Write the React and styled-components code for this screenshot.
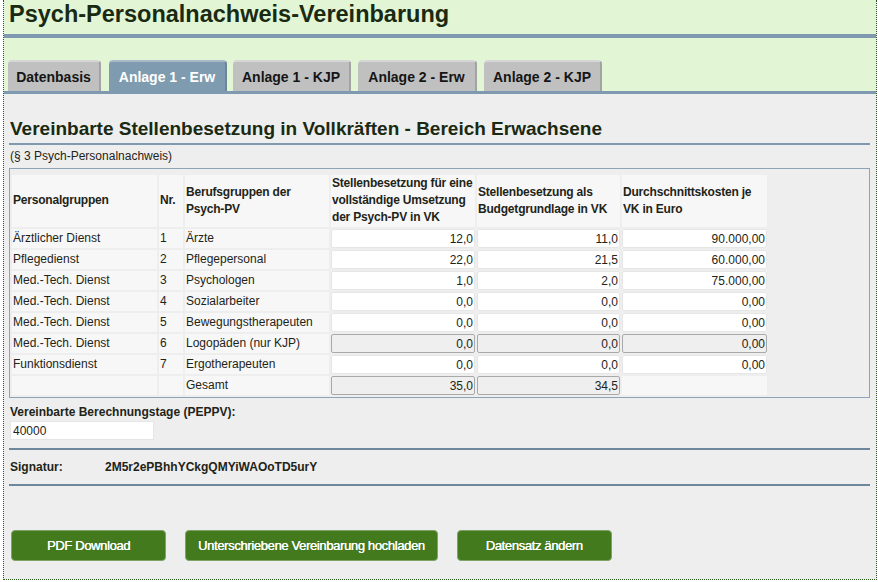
import React from 'react';
import styled, { createGlobalStyle, css } from 'styled-components';

const GlobalStyle = createGlobalStyle`
    html, body {
        margin: 0;
        padding: 0;
        background: #ffffff;
    }
    body {
        font-family: "Liberation Sans", Arial, sans-serif;
        color: #1e2418;
    }
`;

const Page = styled.div`
    margin: 0 1px 0 3px;
    height: 580px;
    border: 1px dotted #2f5a1c;
    border-top: none;
    background: #eeeeee;
    box-sizing: border-box;
    overflow: hidden;
`;

const Header = styled.header`
    background: #e2f6d6;
`;

const Title = styled.h1`
    margin: 0;
    padding: 0 0 0 5px;
    height: 34px;
    box-sizing: border-box;
    font-size: 23.5px;
    line-height: 29px;
    font-weight: bold;
    color: #1a2a12;
`;

const TopRule = styled.div`
    height: 4px;
    background: #7f9ab0;
`;

const TabBar = styled.nav`
    display: flex;
    align-items: flex-end;
    padding: 22px 0 0 4px;
    border-bottom: 3px solid #7f9ab0;
`;

const Tab = styled.div`
    height: 31px;
    width: ${props => props.w}px;
    margin-right: ${props => props.gap}px;
    box-sizing: border-box;
    display: flex;
    align-items: center;
    justify-content: center;
    font-size: 14px;
    font-weight: bold;
    color: #151515;
    background: #c0c0c0;
    border-top: 2px solid #d6d6d6;
    border-right: 2px solid #a3a3a3;
    border-radius: 4px 4px 0 0;

    ${props => props.active && css`
        background: #7f9bb0;
        color: #ffffff;
        border-top-color: #a7b9c7;
        border-right-color: #6d8598;
    `}
`;

const Content = styled.main`
    padding: 0 6px 0 5px;
`;

const SectionTitle = styled.h2`
    margin: 0;
    padding: 25px 0 4px 1px;
    font-size: 19px;
    line-height: 20px;
    font-weight: bold;
    color: #1a2a12;
    border-bottom: 2px solid #7f9ab0;
`;

const Note = styled.div`
    font-size: 12px;
    line-height: 14px;
    padding: 4px 0 5px 1px;
`;

const TableBox = styled.div`
    border: 1px solid #8ea3b6;
    padding: 4px 1px 0 0;
`;

const Table = styled.table`
    border-spacing: 2px;
    font-size: 12px;
    table-layout: fixed;
    width: 759px;
`;

const HeadCell = styled.th`
    background: #f7f7f7;
    text-align: left;
    vertical-align: middle;
    font-weight: bold;
    line-height: 17px;
    letter-spacing: -0.2px;
    padding: 0 0 1px 1px;
    height: 52px;
    width: ${props => props.w}px;
    box-sizing: border-box;
    white-space: nowrap;
`;

const Cell = styled.td`
    background: #f7f7f7;
    height: 19px;
    padding: 0 0 0 1px;
    line-height: 19px;
    white-space: nowrap;

    ${props => props.field && css`
        padding: 0;
    `}
`;

const NumInput = styled.input`
    display: block;
    width: 100%;
    height: 19px;
    box-sizing: border-box;
    margin: 0;
    padding: 0 1px 0 0;
    border: 1px solid #e6e6e6;
    border-radius: 2px;
    background: #ffffff;
    font-family: "Liberation Sans", Arial, sans-serif;
    font-size: 12px;
    color: #1e2418;
    text-align: right;
    outline: none;

    &:disabled {
        background: #efefef;
        border-color: #a9a9a9;
        color: #1e2418;
    }
`;

const FieldLabel = styled.div`
    font-size: 12px;
    font-weight: bold;
    padding: 7px 0 2px 1px;
    line-height: 14px;
`;

const TextInput = styled.input`
    display: block;
    width: 144px;
    height: 19px;
    box-sizing: border-box;
    margin: 0 0 0 1px;
    padding: 0 2px;
    border: 1px solid #e6e6e6;
    background: #ffffff;
    font-family: "Liberation Sans", Arial, sans-serif;
    font-size: 12px;
    color: #1e2418;
    outline: none;
`;

const Divider = styled.div`
    height: 2px;
    background: #6f879b;
    margin-top: ${props => props.mt}px;
`;

const SigRow = styled.div`
    display: flex;
    font-size: 12px;
    font-weight: bold;
    line-height: 14px;
    padding: 10px 0 10px 1px;
`;

const SigLabel = styled.span`
    width: 95px;
`;

const ButtonRow = styled.div`
    display: flex;
    gap: 19px;
    padding: 44px 0 0 2px;
`;

const Button = styled.button`
    min-width: 155px;
    height: 31px;
    padding: 0 12px;
    box-sizing: border-box;
    background: #437a1e;
    border: 1px solid #7fa266;
    border-radius: 4px;
    color: #ffffff;
    font-family: "Liberation Sans", Arial, sans-serif;
    font-size: 13px;
    letter-spacing: -0.35px;
    text-shadow: 0.3px 0 0 #ffffff;
    cursor: pointer;
`;

const tabs = [
    { label: 'Datenbasis', w: 93, gap: 8 },
    { label: 'Anlage 1 - Erw', w: 118, gap: 6 },
    { label: 'Anlage 1 - KJP', w: 118, gap: 7 },
    { label: 'Anlage 2 - Erw', w: 119, gap: 7 },
    { label: 'Anlage 2 - KJP', w: 118, gap: 0 },
];

const rows = [
    { group: 'Ärztlicher Dienst', nr: 1, job: 'Ärzte', a: '12,0', b: '11,0', c: '90.000,00' },
    { group: 'Pflegedienst', nr: 2, job: 'Pflegepersonal', a: '22,0', b: '21,5', c: '60.000,00' },
    { group: 'Med.-Tech. Dienst', nr: 3, job: 'Psychologen', a: '1,0', b: '2,0', c: '75.000,00' },
    { group: 'Med.-Tech. Dienst', nr: 4, job: 'Sozialarbeiter', a: '0,0', b: '0,0', c: '0,00' },
    { group: 'Med.-Tech. Dienst', nr: 5, job: 'Bewegungstherapeuten', a: '0,0', b: '0,0', c: '0,00' },
    { group: 'Med.-Tech. Dienst', nr: 6, job: 'Logopäden (nur KJP)', a: '0,0', b: '0,0', c: '0,00', locked: true },
    { group: 'Funktionsdienst', nr: 7, job: 'Ergotherapeuten', a: '0,0', b: '0,0', c: '0,00' },
];

const App = () => {
    return (
        <>
            <GlobalStyle />
            <Page>
                <Header>
                    <Title>Psych-Personalnachweis-Vereinbarung</Title>
                    <TopRule />
                    <TabBar>
                        {tabs.map((t, i) => (
                            <Tab key={t.label} w={t.w} gap={t.gap} active={i === 1}>{t.label}</Tab>
                        ))}
                    </TabBar>
                </Header>

                <Content>
                    <SectionTitle>Vereinbarte Stellenbesetzung in Vollkräften - Bereich Erwachsene</SectionTitle>
                    <Note>(§ 3 Psych-Personalnachweis)</Note>

                    <TableBox>
                        <Table>
                            <thead>
                                <tr>
                                    <HeadCell w={145}>Personalgruppen</HeadCell>
                                    <HeadCell w={24}>Nr.</HeadCell>
                                    <HeadCell w={144}>Berufsgruppen der<br />Psych-PV</HeadCell>
                                    <HeadCell w={144}>Stellenbesetzung für eine<br />vollständige Umsetzung<br />der Psych-PV in VK</HeadCell>
                                    <HeadCell w={143}>Stellenbesetzung als<br />Budgetgrundlage in VK</HeadCell>
                                    <HeadCell w={145}>Durchschnittskosten je<br />VK in Euro</HeadCell>
                                </tr>
                            </thead>
                            <tbody>
                                {rows.map(r => (
                                    <tr key={r.nr}>
                                        <Cell>{r.group}</Cell>
                                        <Cell>{r.nr}</Cell>
                                        <Cell>{r.job}</Cell>
                                        <Cell field><NumInput defaultValue={r.a} disabled={r.locked} /></Cell>
                                        <Cell field><NumInput defaultValue={r.b} disabled={r.locked} /></Cell>
                                        <Cell field><NumInput defaultValue={r.c} disabled={r.locked} /></Cell>
                                    </tr>
                                ))}
                                <tr>
                                    <Cell />
                                    <Cell />
                                    <Cell>Gesamt</Cell>
                                    <Cell field><NumInput defaultValue="35,0" disabled /></Cell>
                                    <Cell field><NumInput defaultValue="34,5" disabled /></Cell>
                                    <Cell />
                                </tr>
                            </tbody>
                        </Table>
                    </TableBox>

                    <FieldLabel>Vereinbarte Berechnungstage (PEPPV):</FieldLabel>
                    <TextInput defaultValue="40000" />

                    <Divider mt={8} />
                    <SigRow>
                        <SigLabel>Signatur:</SigLabel>
                        <span>2M5r2ePBhhYCkgQMYiWAOoTD5urY</span>
                    </SigRow>
                    <Divider mt={0} />

                    <ButtonRow>
                        <Button>PDF Download</Button>
                        <Button>Unterschriebene Vereinbarung hochladen</Button>
                        <Button>Datensatz ändern</Button>
                    </ButtonRow>
                </Content>
            </Page>
        </>
    );
};

export default App;
